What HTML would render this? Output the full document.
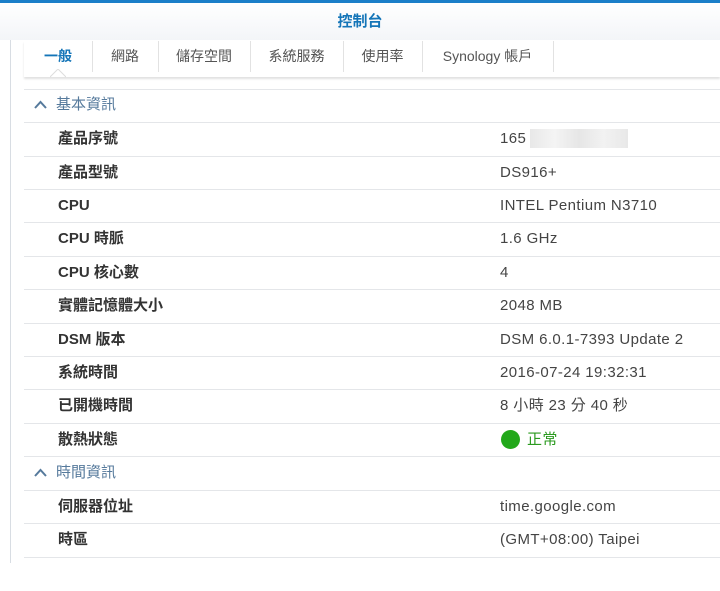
<html><head><style>
body{margin:0;width:720px;height:563px;overflow:hidden;background:#fff;font-family:"Liberation Sans","Noto Sans CJK TC",sans-serif;position:relative}
.top{position:absolute;left:0;top:0;width:720px;height:40px;background:linear-gradient(#fff,#f3f5f8);border-top:3px solid #1c7fc9;box-sizing:border-box}
.top div{text-align:center;color:#1475b8;font-size:15px;font-weight:bold;line-height:38px}
.vl{position:absolute;left:10px;top:40px;width:1px;height:523px;background:#d8dde3}
.tabs{position:absolute;left:24px;top:41px;width:696px;height:36px;box-shadow:0 2px 2px rgba(0,0,0,.12);background:#fff}
.tab{position:absolute;top:0;height:31px;line-height:31px;font-size:14px;color:#555;text-align:center;border-right:1px solid #e2e2e2}
.r{position:absolute;left:24px;width:696px;height:34px;border-top:1px solid #e4e6e9;box-sizing:border-box;font-size:15px}
.l{position:absolute;left:34px;line-height:32px;color:#333;font-weight:bold}
.v{position:absolute;left:476px;line-height:32px;color:#444;letter-spacing:.4px}
.h .l{left:32px;color:#567a9c;font-weight:normal}
</style></head><body>
<div class="top"><div>控制台</div></div>
<div class="vl"></div>
<div class="tabs">
<div class="tab" style="left:0;width:68px;color:#1475b8;font-weight:bold">一般</div>
<div class="tab" style="left:68px;width:66px">網路</div>
<div class="tab" style="left:134px;width:92px">儲存空間</div>
<div class="tab" style="left:226px;width:93px">系統服務</div>
<div class="tab" style="left:319px;width:79px">使用率</div>
<div class="tab" style="left:398px;width:131px">Synology 帳戶</div>
<svg style="position:absolute;left:26px;top:28px" width="16" height="9"><path d="M0 8 L8 0 L16 8" fill="#fff" stroke="#ddd"/></svg>
</div>
<div style="position:absolute;left:24px;top:89px;width:696px;border-top:1px solid #e4e6e9"></div>
<div class="r h" style="top:89px;border:0"><svg style="position:absolute;left:10px;top:11px" width="13" height="9"><path d="M1 8 L6.5 2 L12 8" fill="none" stroke="#567a9c" stroke-width="2"/></svg><span class="l">基本資訊</span></div>
<div class="r" style="top:122px"><span class="l">產品序號</span><span class="v">165</span><span style="position:absolute;left:506px;top:6px;width:98px;height:19px;background:linear-gradient(90deg,#e8e8e8,#f4f4f4,#e6e6e6,#f2f2f2,#e8e8e8)"></span></div>
<div class="r" style="top:156px"><span class="l">產品型號</span><span class="v">DS916+</span></div>
<div class="r" style="top:189px"><span class="l">CPU</span><span class="v">INTEL Pentium N3710</span></div>
<div class="r" style="top:222px"><span class="l">CPU 時脈</span><span class="v">1.6 GHz</span></div>
<div class="r" style="top:256px"><span class="l">CPU 核心數</span><span class="v">4</span></div>
<div class="r" style="top:289px"><span class="l">實體記憶體大小</span><span class="v">2048 MB</span></div>
<div class="r" style="top:323px"><span class="l">DSM 版本</span><span class="v">DSM 6.0.1-7393 Update 2</span></div>
<div class="r" style="top:356px"><span class="l">系統時間</span><span class="v">2016-07-24 19:32:31</span></div>
<div class="r" style="top:389px"><span class="l">已開機時間</span><span class="v">8 小時 23 分 40 秒</span></div>
<div class="r" style="top:423px"><span class="l">散熱狀態</span><span style="position:absolute;left:477px;top:6px;width:19px;height:19px;border-radius:50%;background:#22a81a"></span><span class="v" style="left:503px;color:#2a9a1e">正常</span></div>
<div class="r h" style="top:456px"><svg style="position:absolute;left:10px;top:11px" width="13" height="9"><path d="M1 8 L6.5 2 L12 8" fill="none" stroke="#567a9c" stroke-width="2"/></svg><span class="l">時間資訊</span></div>
<div class="r" style="top:490px"><span class="l">伺服器位址</span><span class="v">time.google.com</span></div>
<div class="r" style="top:523px"><span class="l">時區</span><span class="v">(GMT+08:00) Taipei</span></div>
<div class="r" style="top:557px"></div>
</body></html>
